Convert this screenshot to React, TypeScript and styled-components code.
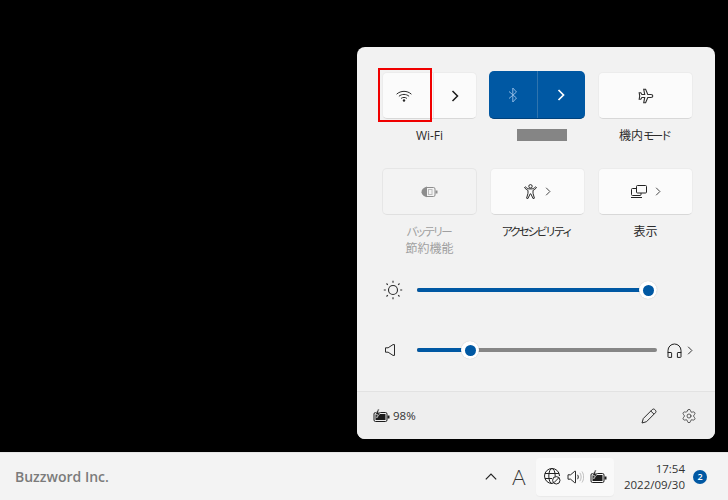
import React from 'react';
import styled, { createGlobalStyle } from 'styled-components';
import { Settings } from 'lucide-react';

const GlobalStyle = createGlobalStyle`
  html, body { margin: 0; padding: 0; background: #000; }
  * { box-sizing: border-box; }
  body { font-family: "Open Sans", "Noto Sans", "Noto Sans CJK JP", sans-serif; }
`;

const BLUE = '#0058a3';
const INK = '#1b1b1b';

const Chevron = ({ size = 6, color = INK, width = 1 }: { size?: number; color?: string; width?: number }) => (
  <svg width={size} height={size * 1.5} viewBox="0 0 8 12" fill="none">
    <path d="M1.500 1 L6.500 6 L1.500 11" stroke={color} strokeWidth={width} />
  </svg>
);

const WifiIcon = () => (
  <svg width="16" height="12" viewBox="0 0 16 12" fill="none" stroke="#2a2a2a" strokeWidth="1">
    <path d="M.6 4.200C4.700.4 11.300.4 15.400 4.200" />
    <path d="M2.900 6.300C5.800 3.800 10.200 3.800 13.100 6.300" />
    <path d="M5.100 8.400C6.800 7.100 9.200 7.100 10.900 8.400" />
    <circle cx="8" cy="10.500" r="1.200" fill="#2a2a2a" stroke="none" />
  </svg>
);

const BluetoothIcon = () => (
  <svg width="12" height="16" viewBox="0 0 12 16" fill="none" stroke="#8db7e2" strokeWidth="1">
    <path d="M2 4.500 L9.500 11 L5.800 15 V1 L9.500 5 L2 11.500" />
  </svg>
);

const PlaneIcon = () => (
  <svg width="16" height="16" viewBox="0 0 16 16" fill="none" stroke="#2e2e2e" strokeWidth="1.100">
    <path d="M14.800 8c0-1-.9-1.500-1.900-1.500H9.800L7.600 1.200H5.700l1 5.300H3.900L2.800 4.800H1.200L1.700 8l-.5 3.200h1.600l1.100-1.700h2.800l-1 5.300h1.900l2.200-5.300h3.100c1 0 1.900-.5 1.900-1.500z" />
  </svg>
);

const SaverIcon = () => (
  <svg width="17" height="12" viewBox="0 0 17 12" fill="none">
    <rect x="4.500" y="1.500" width="9.500" height="9" rx="1.500" stroke="#8d8d8d" />
    <rect x="7.500" y="3.500" width="3.500" height="5" stroke="#bcbcbc" />
    <path d="M14.500 4.500h2v3h-2z" fill="#8d8d8d" />
    <path d="M6 .5C2.500 1.500.3 3.500.5 6.200.7 8.800 3 10.700 6 11.200z" fill="#8d8d8d" />
  </svg>
);

const PersonIcon = () => (
  <svg width="13" height="15" viewBox="0 0 13 15" fill="none" stroke="#2a2a2a" strokeWidth="1">
    <circle cx="6.500" cy="2.300" r="1.700" />
    <path d="M1.300 2.800C2.700 4 3.800 4.800 5 4.900h3c1.200-.1 2.300-.9 3.700-2.100l.8.900C11.400 5 10.300 5.800 9 6.400v2.800l1.400 5-1.300.4-2.300-4.800h-.6l-2.300 4.800-1.300-.4 1.400-5V6.400C2.700 5.800 1.600 5 .5 3.700z" />
  </svg>
);

const DisplayIcon = () => (
  <svg width="16" height="13" viewBox="0 0 16 13" fill="none" stroke="#222" strokeWidth="1">
    <rect x="5.500" y=".5" width="10" height="7.500" rx="1" />
    <path d="M5.500 3.500H1.500a1 1 0 0 0-1 1V9.500a1 1 0 0 0 1 1h7.500a1 1 0 0 0 1-1V8" />
    <path d="M0 12.500h11" />
  </svg>
);

const SunIcon = () => (
  <svg width="20" height="20" viewBox="0 0 20 20" fill="none" stroke="#2a2a2a">
    <circle cx="10" cy="10" r="4.500" strokeWidth="1.100" />
    <path d="M10 .8v2M10 17.200v2M.8 10h2M17.200 10h2M3.500 3.500l1.300 1.300M15.200 15.200l1.300 1.300M3.500 16.500l1.300-1.300M15.200 4.800l1.300-1.300" strokeWidth="1.100" />
  </svg>
);

const SpeakerIcon = () => (
  <svg width="11" height="12" viewBox="0 0 11 12" fill="none" stroke="#2a2a2a" strokeWidth="1">
    <path d="M.5 3.800h2.600L8 .6h1.500v10.800H8L3.100 8.200H.5z" />
  </svg>
);

const SpeakerWavesIcon = () => (
  <svg width="17" height="14" viewBox="0 0 17 14" fill="none" stroke="#2a2a2a" strokeWidth="1">
    <path d="M1 4.800h2.600L7.800 1.200h.7v11.600h-.7L3.600 9.200H1z" />
    <path d="M10.500 4.800c1 1.300 1 3.100 0 4.400" />
    <path d="M12.800 2.800c1.800 2.500 1.800 5.900 0 8.400M15 1.500c2.200 3.300 2.200 7.700 0 11" stroke="#bdbdbd" />
  </svg>
);

const HeadphoneIcon = () => (
  <svg width="15" height="15" viewBox="0 0 15 15" fill="none" stroke="#222" strokeWidth="1">
    <path d="M1 10V7.500a6.500 6.500 0 0 1 13 0V10" />
    <path d="M1 9.500h3a.6.6 0 0 1 .6.6v4.300H1.600a.6.6 0 0 1-.6-.6zM14 9.500h-3a.6.6 0 0 0-.6.6v4.300h3a.6.6 0 0 0 .6-.6z" />
  </svg>
);

const BatteryIcon = () => (
  <svg width="17" height="14" viewBox="0 0 17 14" fill="none">
    <rect x="1" y="3.500" width="13" height="9" rx="1.500" stroke="#1c1c1c" />
    <rect x="2.500" y="5" width="10" height="6" fill="#1c1c1c" />
    <rect x="14.500" y="6.500" width="2" height="3" fill="#1c1c1c" />
    <path d="M5 0 L2.300 5.500 H4.600 L3.700 9 L7.500 3.800 H5.200 L6.300 0z" fill="#1c1c1c" stroke="#f0f0f0" strokeWidth=".6" />
  </svg>
);

const PencilIcon = () => (
  <svg width="16" height="16" viewBox="0 0 16 16" fill="none" stroke="#2a2a2a" strokeWidth="1">
    <path d="M1 15 L2.300 10.500 L11.300 1.500 Q12.500.500 13.700 1.500 L14.500 2.300 Q15.500 3.500 14.500 4.700 L5.500 13.700z" />
    <path d="M9.800 3 L13 6.200" />
  </svg>
);

const GlobeIcon = () => (
  <svg width="17" height="17" viewBox="0 0 17 17" fill="none" stroke="#222" strokeWidth="1">
    <path d="M8 15.500A7.500 7.500 0 1 1 15.500 8" />
    <ellipse cx="8" cy="8" rx="3.200" ry="7.500" />
    <path d="M1 5.500h14M1 10.500h7" />
    <circle cx="12.300" cy="12.300" r="3.700" fill="#f9f9f9" />
    <path d="M9.800 14.800l5-5" />
  </svg>
);

const Desktop = styled.div`
  width: 728px;
  height: 500px;
  display: flex;
  flex-direction: column;
  overflow: hidden;
`;

const Stage = styled.div`
  height: 452px;
  background: #000;
  display: flex;
  justify-content: flex-end;
  padding: 47px 13px 13px 0;
`;

const Panel = styled.section`
  position: relative;
  width: 358px;
  height: 392px;
  background: #f2f2f2;
  border-radius: 8px;
  overflow: hidden;
  display: flex;
  flex-direction: column;
`;

const Tiles = styled.div`
  display: grid;
  grid-template-columns: repeat(3, 95px);
  grid-auto-rows: 96px;
  column-gap: 13px;
  padding: 25px 0 0 25px;
`;

const Cell = styled.div`
  display: flex;
  flex-direction: column;
  align-items: center;
`;

const Tile = styled.div<{ $off?: boolean }>`
  width: 100%;
  height: 47px;
  display: flex;
  align-items: center;
  justify-content: center;
  gap: 8px;
  border-radius: 5px;
  border: 1px solid ${p => (p.$off ? '#e6e6e6' : '#ececec')};
  border-bottom-color: ${p => (p.$off ? '#e0e0e0' : '#d8d8d8')};
  background: ${p => (p.$off ? '#f3f3f3' : '#fbfbfb')};
`;

const ActiveTile = styled.div`
  width: calc(100% + 1px);
  height: 48px;
  margin: -1px 0 0 -1px;
  display: flex;
  border-radius: 5px;
  background: ${BLUE};
  border-bottom: 1px solid #00427c;
`;

const TilePart = styled.div<{ $divider?: string }>`
  flex: 1;
  height: 100%;
  display: flex;
  align-items: center;
  justify-content: center;
  border-left: ${p => (p.$divider ? `1px solid ${p.$divider}` : 'none')};
`;

const Label = styled.div<{ $muted?: boolean }>`
  margin-top: 8px;
  font-family: "Open Sans", "Noto Sans CJK JP", sans-serif;
  font-size: 12px;
  line-height: 17px;
  text-align: center;
  white-space: nowrap;
  color: ${p => (p.$muted ? '#a0a0a0' : '#2b2b2b')};
`;

// kana in the reference font are much narrower than in Noto Sans CJK
const Kana = styled.span`
  font-size: 11.500px;
  letter-spacing: -2.700px;
  margin-right: 2.700px;
`;

const Redacted = styled.div`
  margin: 10px 0 0 9px;
  width: 50px;
  height: 12px;
  background: #858585;
`;

const Highlight = styled.div`
  position: absolute;
  left: 21px;
  top: 21px;
  width: 54px;
  height: 54px;
  border: 2px solid #f00000;
`;

const Sliders = styled.div`
  display: flex;
  flex-direction: column;
  gap: 40px;
  margin-top: 16px;
`;

const SliderRow = styled.div`
  height: 20px;
  display: flex;
  align-items: center;
`;

const SliderIcon = styled.div<{ $pad: number }>`
  width: 60px;
  padding-left: ${p => p.$pad}px;
  display: flex;
  align-items: center;
`;

const Track = styled.div`
  position: relative;
  width: 240px;
  height: 4px;
  border-radius: 2px;
  background: #868686;
`;

const TrackFill = styled.div`
  height: 100%;
  border-radius: 2px;
  background: ${BLUE};
`;

const Thumb = styled.div`
  position: absolute;
  top: 50%;
  width: 18px;
  height: 18px;
  margin: -9px 0 0 -9px;
  border-radius: 50%;
  background: #fff;
  box-shadow: 0 0 1px rgba(0, 0, 0, .25);
  display: flex;
  align-items: center;
  justify-content: center;
  &::after {
    content: '';
    width: 11px;
    height: 11px;
    border-radius: 50%;
    background: ${BLUE};
  }
`;

const Output = styled.div`
  margin-left: 10px;
  display: flex;
  align-items: center;
  gap: 5px;
`;

const Footer = styled.footer`
  margin-top: auto;
  height: 48px;
  background: #eeeeee;
  border-top: 1px solid #e2e2e2;
  display: flex;
  align-items: center;
  padding: 0 18px 0 16px;
`;

const Charge = styled.div`
  display: flex;
  align-items: center;
  gap: 3px;
  font-size: 11.500px;
  color: #333;
`;

const FooterTools = styled.div`
  margin-left: auto;
  display: flex;
  align-items: center;
  gap: 24px;
`;

const Taskbar = styled.div`
  height: 48px;
  background: #f3f3f3;
  border-top: 1px solid #e6e6e6;
  display: flex;
  align-items: center;
  padding-left: 15px;
`;

const Brand = styled.div`
  font-size: 14px;
  font-weight: 600;
  color: #7b7b7b;
`;

const TraySide = styled.div`
  margin-left: auto;
  display: flex;
  align-items: center;
`;

const Caret = styled.div`
  margin-right: 14px;
  display: flex;
`;

const ImeMark = styled.div`
  width: 16px;
  margin-right: 9px;
  font-family: Lato, "Liberation Sans", sans-serif;
  font-weight: 300;
  font-size: 21px;
  line-height: 24px;
  text-align: center;
  color: #333;
`;

const TrayBox = styled.div`
  width: 78px;
  height: 38px;
  border-radius: 4px;
  background: #f9f9f9;
  box-shadow: 0 1px 1px rgba(0, 0, 0, .04);
  display: flex;
  align-items: center;
  justify-content: center;
  gap: 6px;
`;

const Clock = styled.div`
  width: 71px;
  text-align: right;
  font-size: 11.500px;
  line-height: 16px;
  color: #333;
`;

const Badge = styled.div`
  width: 14px;
  height: 14px;
  margin: 0 21px 0 8px;
  border-radius: 50%;
  background: ${BLUE};
  color: #fff;
  font-size: 9px;
  font-weight: 600;
  line-height: 14px;
  text-align: center;
`;

const Slider = ({ value }: { value: number }) => (
  <Track>
    <TrackFill style={{ width: `${value}%` }} />
    <Thumb style={{ left: `${value}%` }} />
  </Track>
);

export default function App() {
  return (
    <Desktop>
      <GlobalStyle />
      <Stage>
        <Panel>
          <Tiles>
            <Cell>
              <Tile>
                <TilePart><WifiIcon /></TilePart>
                <TilePart $divider="#e6e6e6"><Chevron size={8} width={1.500} /></TilePart>
              </Tile>
              <Label>Wi-Fi</Label>
            </Cell>
            <Cell>
              <ActiveTile>
                <TilePart><BluetoothIcon /></TilePart>
                <TilePart $divider="#2f74ae"><Chevron size={8} color="#fff" width={1.700} /></TilePart>
              </ActiveTile>
              <Redacted />
            </Cell>
            <Cell>
              <Tile><PlaneIcon /></Tile>
              <Label>機内<Kana>モード</Kana></Label>
            </Cell>
            <Cell>
              <Tile $off><SaverIcon /></Tile>
              <Label $muted><Kana>バッテリー</Kana><br />節約機能</Label>
            </Cell>
            <Cell>
              <Tile><PersonIcon /><Chevron size={6} color="#333" width={1.200} /></Tile>
              <Label><Kana>アクセシビリティ</Kana></Label>
            </Cell>
            <Cell>
              <Tile><DisplayIcon /><Chevron size={6} color="#333" width={1.200} /></Tile>
              <Label>表示</Label>
            </Cell>
          </Tiles>
          <Highlight />
          <Sliders>
            <SliderRow>
              <SliderIcon $pad={26}><SunIcon /></SliderIcon>
              <Slider value={96.400} />
            </SliderRow>
            <SliderRow>
              <SliderIcon $pad={28}><SpeakerIcon /></SliderIcon>
              <Slider value={22.100} />
              <Output>
                <HeadphoneIcon />
                <Chevron size={6} color="#222" width={1.200} />
              </Output>
            </SliderRow>
          </Sliders>
          <Footer>
            <Charge><BatteryIcon />98%</Charge>
            <FooterTools>
              <PencilIcon />
              <Settings size={16} strokeWidth={1.100} color="#2a2a2a" />
            </FooterTools>
          </Footer>
        </Panel>
      </Stage>
      <Taskbar>
        <Brand>Buzzword Inc.</Brand>
        <TraySide>
          <Caret>
            <svg width="12" height="7" viewBox="0 0 12 7" fill="none">
              <path d="M.8 6.300 L6 1 L11.200 6.300" stroke="#222" strokeWidth="1.200" />
            </svg>
          </Caret>
          <ImeMark>A</ImeMark>
          <TrayBox>
            <GlobeIcon />
            <SpeakerWavesIcon />
            <BatteryIcon />
          </TrayBox>
          <Clock>17:54<br />2022/09/30</Clock>
          <Badge>2</Badge>
        </TraySide>
      </Taskbar>
    </Desktop>
  );
}
